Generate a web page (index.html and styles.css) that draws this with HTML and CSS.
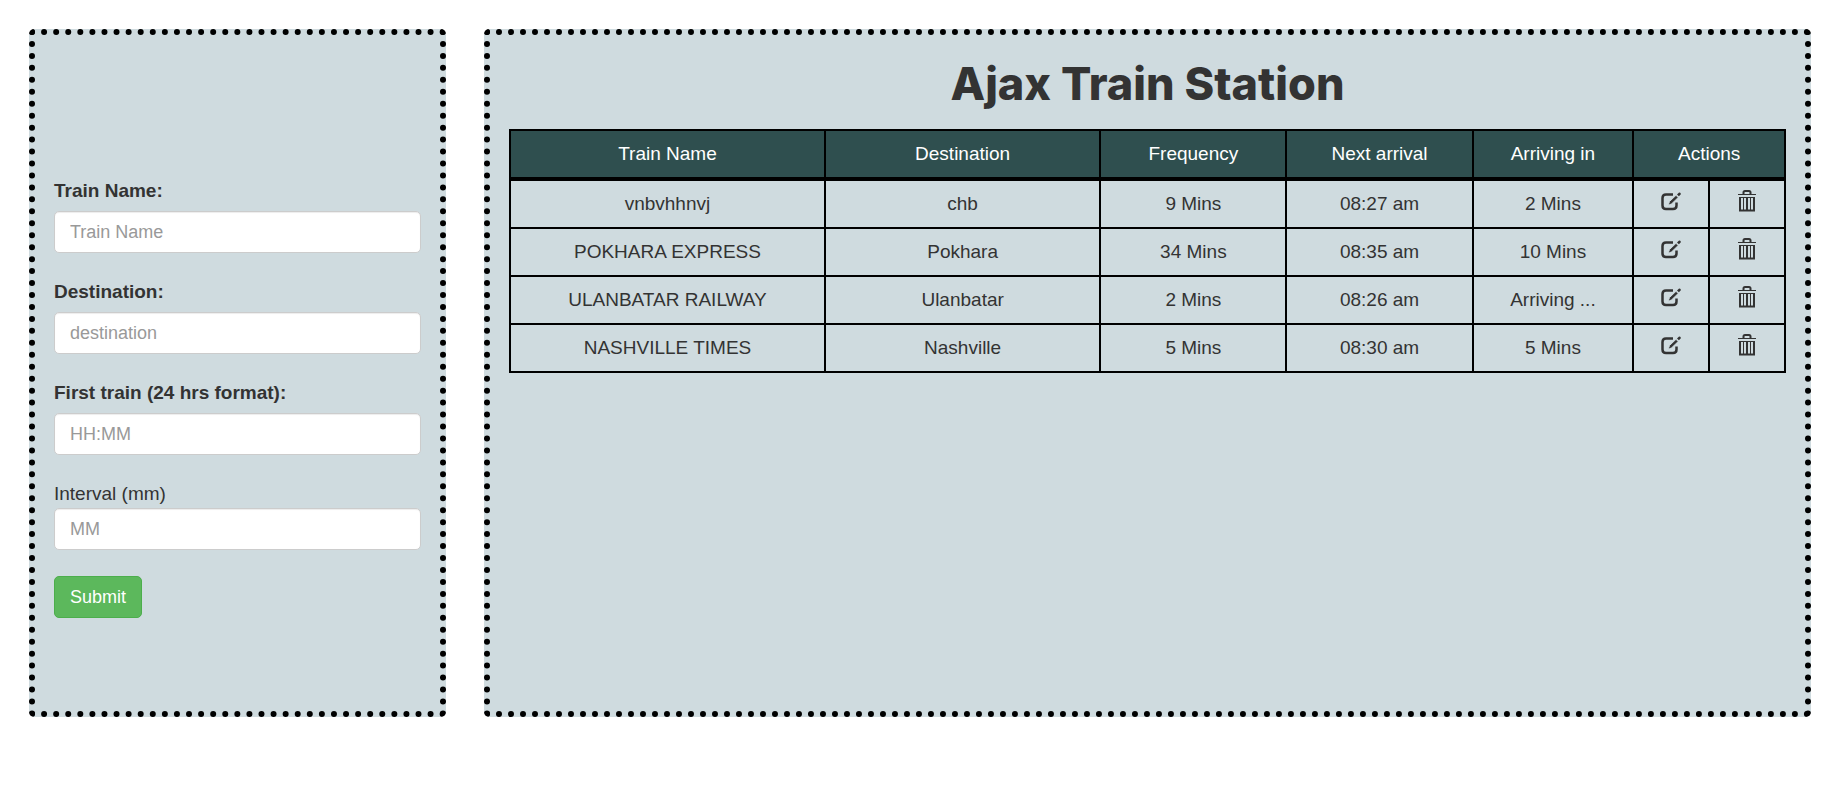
FILE: index.html
```html
<!DOCTYPE html>
<html lang="en">
<head>
<meta charset="utf-8">
<title>Ajax Train Station</title>
<link rel="stylesheet" href="styles.css">
</head>
<body>
<svg class="sprite" aria-hidden="true">
  <symbol id="edit" viewBox="0 0 20 19">
    <path d="M12 2.500H5Q1.500 2.500 1.500 6V13.500Q1.500 17 5 17H12Q15.500 17 15.500 13.500V10.500" fill="none" stroke="currentColor" stroke-width="2.500"/>
    <path d="M7 13.500l1.500-4 6.500-6.200 2.200 2.200-6.500 6.300z" fill="currentColor" stroke="#cfdbdf" stroke-width="1"/>
    <path d="M16 2.500l1.800-1.800q.7-.6 1.400.1l.5.600q.5.600-.1 1.200l-1.700 1.700z" fill="currentColor"/>
  </symbol>
  <symbol id="trash" viewBox="0 0 18 22">
    <path d="M5.500 4V2.500Q5.500 1 7 1h4Q12.500 1 12.500 2.500V4" fill="none" stroke="currentColor" stroke-width="2"/>
    <path d="M0 4h18v1H0zM1 7h16v14.500H1z" fill="currentColor"/>
    <path d="M4 8v11.500M7 8v11.500M11 8v11.500M14 8v11.500" stroke="#cfdbdf" stroke-width="2"/>
  </symbol>
</svg>
<main class="layout">
  <section class="panel panel-form">
    <form class="train-form">
      <div class="field">
        <label class="label" for="name">Train Name:</label>
        <input class="input" id="name" type="text" placeholder="Train Name">
      </div>
      <div class="field">
        <label class="label" for="destination">Destination:</label>
        <input class="input" id="destination" type="text" placeholder="destination">
      </div>
      <div class="field">
        <label class="label" for="first">First train (24 hrs format):</label>
        <input class="input" id="first" type="text" placeholder="HH:MM">
      </div>
      <div class="field">
        <label class="label label-plain" for="interval">Interval (mm)</label>
        <input class="input" id="interval" type="text" placeholder="MM">
      </div>
      <button class="submit" type="submit">Submit</button>
    </form>
  </section>
  <section class="panel panel-board">
    <h1 class="title">Ajax Train Station</h1>
    <table class="board">
      <colgroup>
        <col class="col-name"><col class="col-destination"><col class="col-time"><col class="col-time"><col class="col-arriving"><col class="col-action"><col class="col-action">
      </colgroup>
      <thead>
        <tr><th>Train Name</th><th>Destination</th><th>Frequency</th><th>Next arrival</th><th>Arriving in</th><th colspan="2">Actions</th></tr>
      </thead>
      <tbody>
        <tr><td>vnbvhhnvj</td><td>chb</td><td>9 Mins</td><td>08:27 am</td><td>2 Mins</td>
          <td><button class="icon-button" type="button" aria-label="Edit"><svg class="edit"><use href="#edit"/></svg></button></td>
          <td><button class="icon-button" type="button" aria-label="Delete"><svg class="trash"><use href="#trash"/></svg></button></td></tr>
        <tr><td>POKHARA EXPRESS</td><td>Pokhara</td><td>34 Mins</td><td>08:35 am</td><td>10 Mins</td>
          <td><button class="icon-button" type="button" aria-label="Edit"><svg class="edit"><use href="#edit"/></svg></button></td>
          <td><button class="icon-button" type="button" aria-label="Delete"><svg class="trash"><use href="#trash"/></svg></button></td></tr>
        <tr><td>ULANBATAR RAILWAY</td><td>Ulanbatar</td><td>2 Mins</td><td>08:26 am</td><td>Arriving ...</td>
          <td><button class="icon-button" type="button" aria-label="Edit"><svg class="edit"><use href="#edit"/></svg></button></td>
          <td><button class="icon-button" type="button" aria-label="Delete"><svg class="trash"><use href="#trash"/></svg></button></td></tr>
        <tr><td>NASHVILLE TIMES</td><td>Nashville</td><td>5 Mins</td><td>08:30 am</td><td>5 Mins</td>
          <td><button class="icon-button" type="button" aria-label="Edit"><svg class="edit"><use href="#edit"/></svg></button></td>
          <td><button class="icon-button" type="button" aria-label="Delete"><svg class="trash"><use href="#trash"/></svg></button></td></tr>
      </tbody>
    </table>
  </section>
</main>
</body>
</html>
```
FILE: styles.css
```css
* { box-sizing: border-box; }

body {
  margin: 0;
  background: #fff;
  color: #333;
  font: 19px/26px "Liberation Sans", Arial, sans-serif;
}

.sprite { display: none; }

.layout {
  display: grid;
  grid-template-columns: minmax(0, 417fr) minmax(0, 1327fr);
  gap: 38px;
  padding: 29px;
}

.panel {
  min-height: 688px;
  border: 6px dotted #000;
  border-radius: 5px;
  background: #cfdbdf;
}

.panel-form { padding: 143px 19px 20px; }
.panel-board { padding: 20px 19px; }

.train-form {
  display: flex;
  flex-direction: column;
  align-items: flex-start;
}

.field { width: 100%; margin-bottom: 26px; }

.label {
  display: block;
  margin-bottom: 7px;
  font-weight: 700;
}

.label-plain { margin-bottom: 1px; font-weight: 400; }

.input {
  display: block;
  width: 100%;
  height: 42px;
  padding: 0 15px;
  border: 1px solid #ccc;
  border-radius: 5px;
  background: #fff;
  box-shadow: inset 0 1px 1px rgba(0, 0, 0, .075);
  color: #555;
  font: inherit;
  font-size: 18px;
}

.input::placeholder { color: #999; opacity: 1; }

.submit {
  height: 42px;
  padding: 0 15px;
  border: 1px solid #4cae4c;
  border-radius: 5px;
  background: #5cb85c;
  color: #fff;
  font: inherit;
  font-size: 18px;
}

.title {
  margin: 0 0 16px;
  font: 800 45px/58px Inter, "DejaVu Sans", sans-serif;
  text-align: center;
}

.board {
  width: 100%;
  border-collapse: collapse;
  table-layout: fixed;
  border: 2px solid #000;
  text-align: center;
}

.col-name { width: 24.7%; }
.col-destination { width: 21.6%; }
.col-time { width: 14.6%; }
.col-arriving { width: 12.6%; }
.col-action { width: 5.95%; }

.board th,
.board td {
  height: 48px;
  padding: 0;
  border: 2px solid #000;
}

.board th {
  height: 49px;
  border-bottom-width: 4px;
  background: #2f4f4f;
  color: #fff;
  font-weight: 400;
}

.board tbody tr:first-child td { height: 49px; }

.icon-button {
  display: block;
  margin: 0 auto;
  padding: 0 0 6px;
  border: 0;
  background: none;
  color: #333;
}

.icon-button svg { display: block; }
.edit { width: 20px; height: 19px; }
.trash { width: 18px; height: 22px; }
```
